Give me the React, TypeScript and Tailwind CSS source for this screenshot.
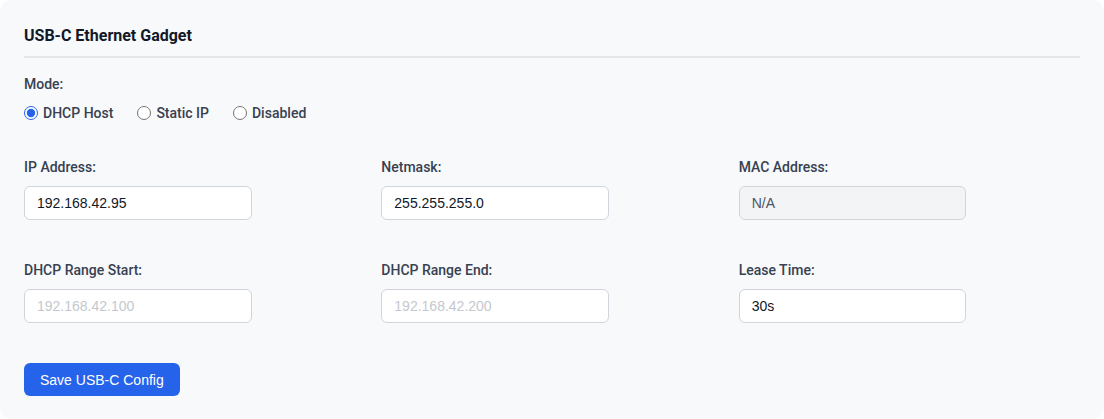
import React from "react";

const labelCls = "block text-sm font-medium text-[#374151] mb-[9px] leading-5";
const inputBase =
  "w-2/3 h-[34px] rounded-md border border-[#d1d5db] px-3 text-sm placeholder:text-[#c4c8ce] outline-none [font-family:'Liberation_Sans',Arial,sans-serif]";

function Field({ label, value, placeholder, disabled }: { label: string; value?: string; placeholder?: string; disabled?: boolean }) {
  return (
    <div className="mb-6">
      <label className={labelCls}>{label}</label>
      <input
        type="text"
        defaultValue={value}
        placeholder={placeholder}
        disabled={disabled}
        className={
          disabled
            ? inputBase + " bg-[#f3f4f6] text-[#4b5563]"
            : inputBase + " bg-white text-[#111827]"
        }
      />
    </div>
  );
}

export default function App() {
  return (
    <div className="w-[1104px] h-[419px] bg-white [font-family:Roboto,'Noto_Sans',sans-serif]">
      <div className="h-full rounded-xl bg-[#f8f9fb] p-6">
        <h2 className="text-base font-bold leading-6 text-[#111827] pb-2 border-b-2 border-[#e5e7eb]">
          USB-C Ethernet Gadget
        </h2>
        <div className="mt-4">
          <div className="text-sm font-medium text-[#374151] leading-5 mb-[9px]">Mode:</div>
          <div className="flex items-center gap-6 text-sm font-medium text-[#374151] leading-5">
            <label className="flex items-center gap-[5px]">
              <input type="radio" name="mode" defaultChecked className="w-[14px] h-[14px] accent-[#2563eb]" />
              DHCP Host
            </label>
            <label className="flex items-center gap-[5px]">
              <input type="radio" name="mode" className="w-[14px] h-[14px] accent-[#2563eb]" />
              Static IP
            </label>
            <label className="flex items-center gap-[5px]">
              <input type="radio" name="mode" className="w-[14px] h-[14px] accent-[#2563eb]" />
              Disabled
            </label>
          </div>
        </div>
        <div className="mt-[34px] grid grid-cols-3 gap-x-4 gap-y-4">
          <Field label="IP Address:" value="192.168.42.95" />
          <Field label="Netmask:" value="255.255.255.0" />
          <Field label="MAC Address:" value="N/A" disabled />
          <Field label="DHCP Range Start:" placeholder="192.168.42.100" />
          <Field label="DHCP Range End:" placeholder="192.168.42.200" />
          <Field label="Lease Time:" value="30s" />
        </div>
        <div className="mt-4">
          <button className="h-[33px] rounded-md bg-[#2563eb] px-4 text-sm text-white [font-family:'Liberation_Sans',Arial,sans-serif]">
            Save USB-C Config
          </button>
        </div>
      </div>
    </div>
  );
}
